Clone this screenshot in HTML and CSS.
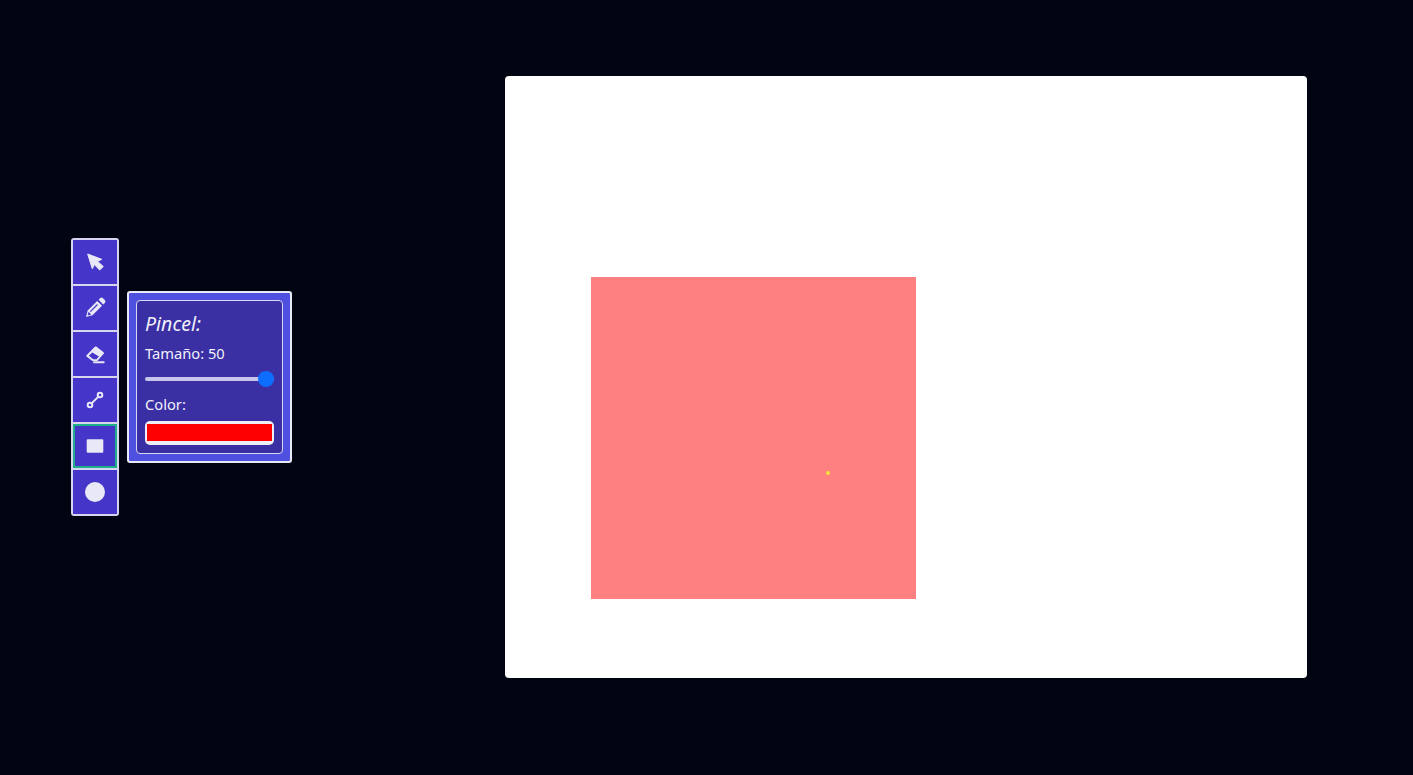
FILE: index.html
```html
<!DOCTYPE html>
<html lang="es">
<head>
<meta charset="utf-8">
<title>Pincel</title>
<link rel="stylesheet" href="styles.css">
</head>
<body>
<main class="app">
  <nav class="toolbar">
    <button class="tool">
      <svg class="icon" viewBox="0 0 24 24"><path class="fill solid" d="M4.700 4 18.700 9.300 14.600 11.400 20.300 16.600 16.600 20 11.400 14.600 9.300 18.700Z"/></svg>
    </button>
    <button class="tool">
      <svg class="icon" viewBox="0 0 24 24"><path class="fill" d="M3 21l1.700-6.500L14.200 5l4.800 4.800-9.500 9.500Z"/><path class="fill" d="M15.600 3.700l1.500-1.500c.8-.8 2-.8 2.800 0l1.900 1.900c.8.800.8 2 0 2.800l-1.500 1.500Z"/><path class="cut" d="M7.300 15.700 14.500 8.500"/><path class="hole" d="M5.600 15.800l-1 3.600 3.600-1Z"/></svg>
    </button>
    <button class="tool">
      <svg class="icon" viewBox="0 0 24 24"><path class="fill" fill-rule="evenodd" d="M11.300 5.200c.8-.8 1.800-.8 2.600-.2l6.400 4.900c.8.700.8 1.500.2 2.200L14.300 19H9.400L3.800 14.800c-.7-.6-.7-1.300 0-1.900ZM9.300 10.600 5.900 13.800l4.300 3.400h3.200l2.500-2.700Z"/><path class="line" d="M11 20.300h9.700"/></svg>
    </button>
    <button class="tool">
      <svg class="icon" viewBox="0 0 24 24"><circle class="line" cx="7" cy="17" r="2.300"/><circle class="line" cx="17" cy="7" r="2.300"/><path class="line" d="M8.600 15.400 15.400 8.600"/></svg>
    </button>
    <button class="tool tool-active">
      <svg class="icon" viewBox="0 0 24 24"><rect class="fill" x="3.700" y="5.300" width="16.600" height="13.400" rx="1"/></svg>
    </button>
    <button class="tool">
      <svg class="icon" viewBox="0 0 24 24"><circle class="fill" cx="12" cy="12" r="10"/></svg>
    </button>
  </nav>

  <aside class="panel">
    <div class="panel-inner">
      <h2 class="panel-title">Pincel:</h2>
      <label class="field-label" for="size">Tamaño: 50</label>
      <input class="slider" id="size" type="range" min="1" max="50" value="50">
      <label class="field-label" for="color">Color:</label>
      <input class="color" id="color" type="color" value="#ff0000">
    </div>
  </aside>

  <section class="canvas">
    <div class="shape"><span class="dot"></span></div>
  </section>
</main>
</body>
</html>
```

FILE: styles.css
```css
* { box-sizing: border-box; }

html, body { height: 100%; }

body {
  margin: 0;
  background: #000511;
  font-family: "Noto Sans", "Open Sans", sans-serif;
  color: #f0f0fa;
}

.app {
  height: 753px;
  display: flex;
  align-items: center;
  padding: 0 106px 0 71px;
}

.toolbar {
  width: 48px;
  display: flex;
  flex-direction: column;
  gap: 2px;
  border: 2px solid #d6d4f0;
  border-radius: 3px;
  background: #d6d4f0;
}

.tool {
  width: 44px;
  height: 44px;
  padding: 0;
  display: flex;
  align-items: center;
  justify-content: center;
  background: #4535c8;
  border: 0;
}

.tool-active {
  border: 2px solid #1fae8c;
}

.icon { width: 24px; height: 24px; display: block; flex: none; }

.fill { fill: #e9e8f6; }

.hole { fill: #4535c8; }

.cut {
  fill: none;
  stroke: #4535c8;
  stroke-width: 1.200;
}

.solid {
  stroke: #e9e8f6;
  stroke-width: 1;
  stroke-linejoin: round;
}

.line {
  fill: none;
  stroke: #e9e8f6;
  stroke-width: 2;
  stroke-linejoin: round;
  stroke-linecap: round;
}

.panel {
  width: 165px;
  height: 172px;
  margin-left: 8px;
  padding: 7px;
  background: #5050e0;
  border: 2px solid #e9e9f8;
  border-radius: 3px;
}

.panel-inner {
  height: 100%;
  padding: 11px 8px 0;
  display: flex;
  flex-direction: column;
  background: #3a2fa3;
  border: 1px solid #d9d8f2;
  border-radius: 4px;
}

.panel-title {
  margin: 0;
  font-size: 19.500px;
  line-height: 24px;
  font-weight: 400;
  font-style: italic;
}

.field-label {
  display: block;
  font-size: 14.700px;
  line-height: 20px;
}

.panel-title + .field-label { margin-top: 7px; }

.slider {
  -webkit-appearance: none;
  appearance: none;
  width: 129px;
  height: 16px;
  margin: 8px 0 7px;
  padding: 0;
  background: transparent;
  display: block;
}

.slider::-webkit-slider-runnable-track {
  height: 4px;
  background: #c8c6ee;
  border-radius: 2px;
}

.slider::-webkit-slider-thumb {
  -webkit-appearance: none;
  width: 16px;
  height: 16px;
  margin-top: -6px;
  border-radius: 50%;
  background: #0d6efd;
  border: 0;
}

.color {
  -webkit-appearance: none;
  appearance: none;
  width: 129px;
  height: 24px;
  margin: 7px 0 0;
  padding: 0;
  background: #eeeef6;
  border: 0;
  border-radius: 5px;
  display: block;
}

.color::-webkit-color-swatch-wrapper { padding: 3px 2px 4px; }

.color::-webkit-color-swatch {
  border: 0;
  border-radius: 0;
}

.canvas {
  width: 802px;
  height: 602px;
  margin-left: auto;
  padding: 201px 0 0 86px;
  background: #fff;
  border-radius: 4px;
}

.shape {
  width: 325px;
  height: 322px;
  padding: 194px 0 0 235px;
  background: #ff8080;
}

.dot {
  display: block;
  width: 4px;
  height: 4px;
  border-radius: 50%;
  background: #f4e13a;
}
```
